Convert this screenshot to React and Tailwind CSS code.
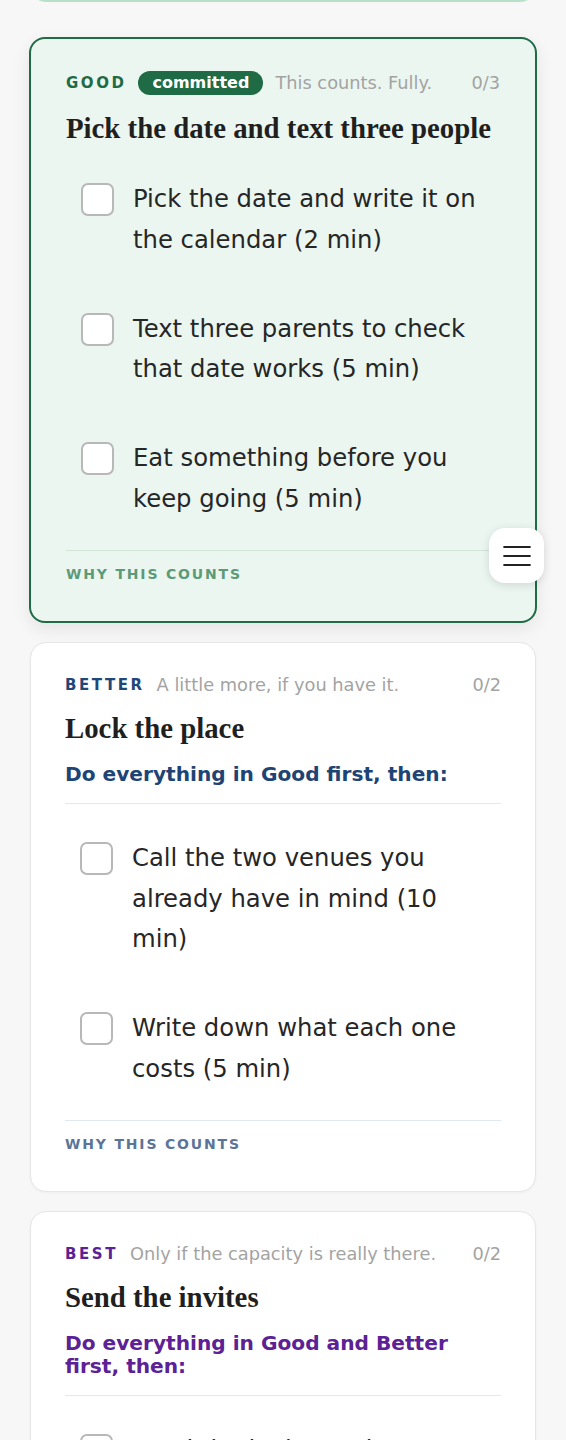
import React from "react";

const tiers = [
  {
    id: "good",
    label: "GOOD",
    badge: "committed",
    subtitle: "This counts. Fully.",
    count: "0/3",
    title: "Pick the date and text three people",
    preface: null,
    items: [
      "Pick the date and write it on the calendar (2 min)",
      "Text three parents to check that date works (5 min)",
      "Eat something before you keep going (5 min)",
    ],
  },
  {
    id: "better",
    label: "BETTER",
    subtitle: "A little more, if you have it.",
    count: "0/2",
    title: "Lock the place",
    preface: "Do everything in Good first, then:",
    items: [
      "Call the two venues you already have in mind (10 min)",
      "Write down what each one costs (5 min)",
    ],
  },
  {
    id: "best",
    label: "BEST",
    subtitle: "Only if the capacity is really there.",
    count: "0/2",
    title: "Send the invites",
    preface: "Do everything in Good and Better first, then:",
    items: [
      "Send the invite to the group chat (5 min)",
      "Set a reminder to follow up (2 min)",
    ],
  },
];

const styles = {
  good: {
    card: "-mx-px border-2 border-[#1e6b46] bg-[#ebf6f0] px-[35px] shadow-[0_6px_18px_rgba(0,0,0,0.08)]",
    label: "text-[#1e6b46]",
    preface: "text-[#1e6b46] border-[#cfe5d8]",
    divider: "border-[#cfe5d8]",
    why: "text-[#5c9a78]",
  },
  better: {
    card: "border border-[#e6e6e6] bg-white px-[34px] shadow-[0_1px_3px_rgba(0,0,0,0.04)]",
    label: "text-[#1f4778]",
    preface: "text-[#1e4475] border-[#e2e8f0]",
    divider: "border-[#e2e8f0]",
    why: "text-[#5b7599]",
  },
  best: {
    card: "border border-[#e6e6e6] bg-white px-[34px] shadow-[0_1px_3px_rgba(0,0,0,0.04)]",
    label: "text-[#5b2195]",
    preface: "text-[#5b2195] border-[#e9e4f5]",
    divider: "border-[#e9e4f5]",
    why: "text-[#7d6aa0]",
  },
};

const TierCard = ({ tier }) => {
  const s = styles[tier.id];
  return (
    <section className={`rounded-2xl pt-8 pb-[35px] ${s.card}`}>
      {/* Header */}
      <div className="flex items-center gap-3">
        <span className={`text-[15px] font-bold tracking-[0.17em] leading-5 ${s.label}`}>
          {tier.label}
        </span>
        {tier.badge && (
          <span className="h-6 px-[14px] rounded-full bg-[#1e6b46] text-white text-[16px] font-bold leading-6">
            {tier.badge}
          </span>
        )}
        <span className="text-[17.8px] leading-5 text-[#a3a3a3]">{tier.subtitle}</span>
        <span className="ml-auto text-[17.8px] leading-5 text-[#a3a3a3]">{tier.count}</span>
      </div>

      <h2 className="mt-4 font-['Liberation_Serif',serif] text-[28.8px] font-bold leading-[34px] text-[#1f1f1f]">
        {tier.title}
      </h2>

      {tier.preface && (
        <p className={`mt-[18px] pb-[17px] border-b text-[20.15px] font-bold leading-[23px] ${s.preface}`}>
          {tier.preface}
        </p>
      )}

      {/* Steps */}
      <ul className="mt-[18px] flex flex-col gap-4">
        {tier.items.map((item) => (
          <li key={item} className="flex items-start gap-[19px] py-4 pl-[15px] pr-4">
            <span className="mt-1 w-[33px] h-[33px] shrink-0 rounded-[7px] border-2 border-[#b8b8b8] bg-white" />
            <span className="text-[24.3px] leading-[40.8px] text-[#262626]">{item}</span>
          </li>
        ))}
      </ul>

      <div className={`mt-[14px] border-t pt-[11px] ${s.divider}`}>
        <span className={`text-[14px] font-bold tracking-[0.13em] leading-5 ${s.why}`}>
          WHY THIS COUNTS
        </span>
      </div>
    </section>
  );
};

export default function App() {
  return (
    <div className="relative min-h-screen overflow-hidden bg-[#f7f7f7] px-[30px] font-['DejaVu_Sans',sans-serif]">
      {/* previous card, scrolled off */}
      <div className="-mt-[38px] h-[40px] rounded-2xl border-2 border-[#b8e0c9] bg-white" />

      <div className="mt-[35px] flex flex-col gap-[19px]">
        {tiers.map((tier) => (
          <TierCard key={tier.id} tier={tier} />
        ))}
      </div>

      {/* floating menu */}
      <button className="absolute top-[528px] left-[489px] w-[55px] h-[55px] rounded-2xl bg-white shadow-[0_2px_10px_rgba(0,0,0,0.12)] flex items-center justify-center">
        <svg width="28" height="22" viewBox="0 0 28 22" fill="none" stroke="#222" strokeWidth="2.2" strokeLinecap="round">
          <path d="M1.2 2h25.6" />
          <path d="M1.2 11h25.6" />
          <path d="M1.2 20h25.6" />
        </svg>
      </button>
    </div>
  );
}
